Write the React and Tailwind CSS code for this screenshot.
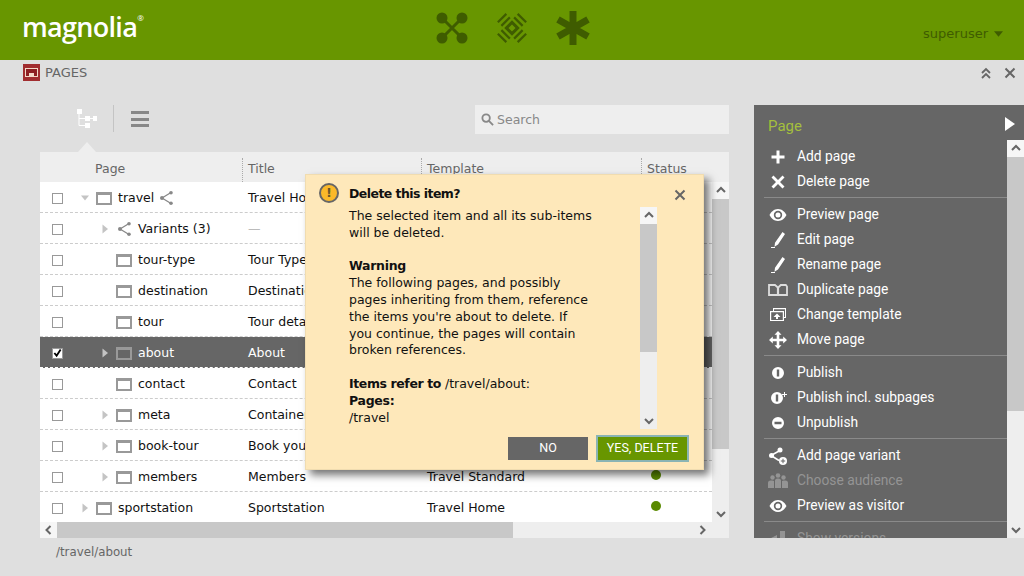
import React from 'react';

const PageIcon = () => (
  <span className="block w-4 h-[13px] border-2 border-[#999] border-t-[3px] bg-transparent shrink-0" />
);

const ShareIcon = ({ className = 'w-4 h-4' }) => (
  <svg viewBox="0 0 16 16" className={className} fill="currentColor">
    <path d="M3 8l9-5.500M3 8l9 5.500" stroke="currentColor" strokeWidth="1.300" fill="none" />
    <circle cx="3" cy="8" r="2" />
    <circle cx="12" cy="2.800" r="1.800" />
    <circle cx="12" cy="13.200" r="1.800" />
  </svg>
);

const Caret = ({ open }) => (
  <svg viewBox="0 0 10 10" className="w-[10px] h-[10px] text-[#c4c4c4]" fill="currentColor">
    {open ? <path d="M1 2.500h8L5 7.500z" /> : <path d="M2.500 0.500v9L8 5z" />}
  </svg>
);

const Chevron = ({ dir }) => {
  const paths = {
    up: 'M2 7l4-4 4 4',
    down: 'M2 4l4 4 4-4',
    left: 'M7.500 2l-4 4 4 4',
    right: 'M4.500 2l4 4-4 4',
  };
  return (
    <svg viewBox="0 0 12 12" className="w-3 h-3 text-[#666]" fill="none" stroke="currentColor" strokeWidth="2">
      <path d={paths[dir]} />
    </svg>
  );
};

const rows = [
  { name: 'travel', title: 'Travel Home', level: 0, caret: 'open', share: true },
  { name: 'Variants (3)', title: '—', level: 1, caret: 'closed', variants: true },
  { name: 'tour-type', title: 'Tour Type', level: 1 },
  { name: 'destination', title: 'Destination', level: 1 },
  { name: 'tour', title: 'Tour detail', level: 1 },
  { name: 'about', title: 'About', level: 1, caret: 'closed', selected: true },
  { name: 'contact', title: 'Contact', level: 1 },
  { name: 'meta', title: 'Container', level: 1, caret: 'closed' },
  { name: 'book-tour', title: 'Book your tour', level: 1, caret: 'closed' },
  { name: 'members', title: 'Members', template: 'Travel Standard', level: 1, caret: 'closed', status: true },
  { name: 'sportstation', title: 'Sportstation', template: 'Travel Home', level: 0, caret: 'closed', status: true },
];

const TableRow = ({ row }) => (
  <div
    className={
      'flex items-center h-[31px] pt-[2px] border-b border-dashed text-[12.5px] ' +
      (row.selected ? 'bg-[#666] text-white border-white' : 'bg-white text-[#111] border-[#ccc]')
    }
  >
    <div className="w-[35px] flex justify-center shrink-0">
      <span className="w-[11px] h-[11px] border border-[#999] bg-white flex items-center justify-center">
        {row.selected && (
          <svg viewBox="0 0 10 10" className="w-[10px] h-[10px]" fill="none" stroke="#000" strokeWidth="2">
            <path d="M1.500 5l2.500 3L8.500 1" />
          </svg>
        )}
      </span>
    </div>
    <div className={'flex items-center w-[173px] shrink-0 ' + (row.level === 0 ? 'pl-[5px]' : 'pl-[25px]')}>
      <span className="w-[16px] flex justify-start shrink-0">{row.caret && <Caret open={row.caret === 'open'} />}</span>
      {row.variants ? (
        <span className="flex items-center ml-[1px] gap-[5px] text-[#111]">
          <ShareIcon className="w-4 h-4 text-[#888]" />
          <span>{row.name}</span>
        </span>
      ) : (
        <span className="flex items-center gap-[6px]">
          <PageIcon />
          <span>{row.name}</span>
          {row.share && <ShareIcon className="w-4 h-4 -ml-[1px] text-[#888]" />}
        </span>
      )}
    </div>
    <div className={'w-[179px] shrink-0 ' + (row.variants ? 'text-[#bbb]' : '')}>{row.title}</div>
    <div className="w-[220px] shrink-0">{row.template}</div>
    {row.status && <span className="w-[10px] h-[10px] rounded-full bg-[#5a8a00] ml-[4px] mb-[5px]" />}
  </div>
);

const I = ({ children }) => (
  <svg viewBox="0 0 20 20" className="w-5 h-5" fill="currentColor">
    {children}
  </svg>
);

const icons = {
  plus: <path d="M8.500 3.500h3v5h5v3h-5v5h-3v-5h-5v-3h5z" />,
  x: <path d="M5.500 3.500L10 8l4.500-4.500 2 2L12 10l4.500 4.500-2 2L10 12l-4.500 4.500-2-2L8 10 3.500 5.500z" />,
  eye: (
    <path
      fillRule="evenodd"
      d="M10 4c4 0 7 3 8.500 6-1.500 3-4.500 6-8.500 6s-7-3-8.500-6C3 7 6 4 10 4zm0 1.800A4.200 4.200 0 1010 14.200 4.200 4.200 0 0010 5.800zm0 1.700a2.500 2.500 0 110 5 2.500 2.500 0 010-5z"
    />
  ),
  pen: <path d="M14.500 2l2.500 2-7 10.500-3.500 2.300.5-4zM3 17h4v1H3z" />,
  book: (
    <path
      d="M1 5h6l2.800 2.500V15H1zM10.200 7.500L12.800 5h5l1.200 1.500V15h-8.800z"
      fill="none"
      stroke="#ddd"
      strokeWidth="1.800"
    />
  ),
  template: (
    <path
      fillRule="evenodd"
      d="M5 3h13v10h-2v3H2V6h3zm1 1.200V6h10v6h1V4.200zM3.200 7.200V15h11.600V7.200zM9 8.500l3.500 3.500H10v2H8v-2H5.500z"
    />
  ),
  move: (
    <path d="M10 1l3.500 3.800h-2.200v3.900h3.900V6.500L19 10l-3.800 3.500v-2.200h-3.900v3.900h2.200L10 19l-3.500-3.800h2.200v-3.900H4.800v2.200L1 10l3.800-3.500v2.200h3.900V4.800H6.500z" />
  ),
  publish: <path fillRule="evenodd" d="M10 4a6 6 0 110 12 6 6 0 010-12zM8.800 6.500v7h2.400v-7z" />,
  publishPlus: (
    <path
      fillRule="evenodd"
      d="M9 4a6 6 0 110 12A6 6 0 019 4zM7.800 6.500v7h2.400v-7zM16 4h1v2h2v1h-2v2h-1V7h-2V6h2z"
    />
  ),
  minus: <path fillRule="evenodd" d="M10 4a6 6 0 110 12 6 6 0 010-12zM6.500 8.800v2.400h7V8.800z" />,
  variant: (
    <>
      <path d="M3 9.500l9-5M3 9.500l8 5" stroke="currentColor" strokeWidth="1.500" fill="none" />
      <circle cx="3.500" cy="9.500" r="2.500" />
      <circle cx="12" cy="4" r="2.500" />
      <circle cx="15" cy="15" r="4" />
      <path d="M14.500 12.800h1v1.700h1.700v1h-1.700v1.700h-1v-1.700h-1.700v-1h1.700z" fill="#666" />
    </>
  ),
  group: (
    <>
      <circle cx="4.500" cy="6.500" r="2.200" />
      <circle cx="10" cy="4.500" r="2.300" />
      <circle cx="15.500" cy="6.500" r="2.200" />
      <path d="M0 17v-5a2.500 2.500 0 012.500-2.500h2L6 10v7zM14 17v-7l1.500-.5h2A2.500 2.500 0 0120 12v5z" />
      <path d="M7 17V10a2.500 2.500 0 012.500-2.500h1A2.500 2.500 0 0113 10v7z" />
    </>
  ),
  versions: <path d="M12 2h5v7h-5zM3 9l6-3v3l-2 3 4 2v3H6l-4-4z" />,
};

const menu = [
  ['plus', 'Add page'],
  ['x', 'Delete page'],
  null,
  ['eye', 'Preview page'],
  ['pen', 'Edit page'],
  ['pen', 'Rename page'],
  ['book', 'Duplicate page'],
  ['template', 'Change template'],
  ['move', 'Move page'],
  null,
  ['publish', 'Publish'],
  ['publishPlus', 'Publish incl. subpages'],
  ['minus', 'Unpublish'],
  null,
  ['variant', 'Add page variant'],
  ['group', 'Choose audience', true],
  ['eye', 'Preview as visitor'],
  null,
  ['versions', 'Show versions', true],
];

const MenuItem = ({ item }) => {
  if (!item) {
    return (
      <div className="h-2 pt-[3px] pl-[10px]">
        <div className="h-[1px] bg-[#8a8a8a]" />
      </div>
    );
  }
  const [icon, label, disabled] = item;
  return (
    <div className={'flex items-center h-[25px] shrink-0 ' + (disabled ? 'text-[#949494]' : 'text-white')}>
      <span className="w-5 ml-[14px] mr-[9px] flex justify-center">
        <I>{icons[icon]}</I>
      </span>
      <span className="text-[13.8px]">{label}</span>
    </div>
  );
};

const HeaderIcons = () => (
  <div className="flex items-center gap-[28px] text-[#3f5c00]">
    <svg viewBox="0 0 32 32" className="w-8 h-8" fill="currentColor">
      <path d="M6 6l20 20M26 6L6 26" stroke="currentColor" strokeWidth="3" />
      <circle cx="6" cy="6" r="5.500" />
      <circle cx="26" cy="6" r="5.500" />
      <circle cx="6" cy="26" r="5.500" />
      <circle cx="26" cy="26" r="5.500" />
    </svg>
    <svg viewBox="-16 -16 32 32" className="w-8 h-8" fill="none" stroke="currentColor" strokeWidth="2.200">
      <g transform="rotate(45)">
        <rect x="-4" y="-4" width="8" height="8" strokeWidth="3" />
        <path d="M-6-9H6M-6 9H6M-9-6V6M9-6V6M-6-14H6M-6 14H6M-14-6V6M14-6V6" />
      </g>
    </svg>
    <svg viewBox="0 0 34 34" className="w-[34px] h-[34px]" fill="none" stroke="currentColor" strokeWidth="7">
      <path d="M17 0v34M2 8.500l30 17M32 8.500l-30 17" />
    </svg>
  </div>
);

const Scrollbar = ({ className, thumb }) => (
  <div className={'flex flex-col w-[17px] bg-[#eee] shrink-0 ' + className}>
    <div className="h-[17px] flex items-center justify-center bg-[#f6f6f6] shrink-0">
      <Chevron dir="up" />
    </div>
    <div className={'bg-[#c8c8c8] shrink-0 ' + thumb} />
    <div className="flex-1" />
    <div className="h-[17px] flex items-center justify-center shrink-0">
      <Chevron dir="down" />
    </div>
  </div>
);

const Dialog = () => (
  <div className="absolute left-[305px] top-[174px] w-[399px] h-[296px] bg-[#fee8ba] border border-[#f0dcb0] shadow-[5px_5px_8px_rgba(0,0,0,0.55)] text-[#111] text-[12.5px] leading-[16.8px]">
    <div className="absolute left-[13px] top-[8px] w-5 h-5 rounded-full border-2 border-[#666] bg-[#fbb92a] flex items-center justify-center text-[#6b5a2a] font-bold text-[13px]">
      !
    </div>
    <div className="absolute left-[43px] top-[11px] font-bold tracking-[-0.55px]">Delete this item?</div>
    <svg viewBox="0 0 12 12" className="absolute left-[368px] top-[14px] w-3 h-3 text-[#666]" fill="none" stroke="currentColor" strokeWidth="2">
      <path d="M1.500 1.500l9 9M10.500 1.500l-9 9" />
    </svg>
    <div className="absolute left-[43px] top-[33px] w-[290px]">
      <p>
        The selected item and all its sub-items
        <br />
        will be deleted.
      </p>
      <p className="mt-[16.8px] font-bold tracking-[-0.3px]">Warning</p>
      <p>
        The following pages, and possibly
        <br />
        pages inheriting from them, reference
        <br />
        the items you're about to delete. If
        <br />
        you continue, the pages will contain
        <br />
        broken references.
      </p>
      <p className="mt-[16.8px]">
        <b className="tracking-[-0.4px]">Items refer to</b> /travel/about:
      </p>
      <p className="font-bold tracking-[-0.3px]">Pages:</p>
      <p>/travel</p>
    </div>
    <Scrollbar className="absolute left-[334px] top-[32px] h-[222px]" thumb="h-[128px]" />
    <div className="absolute left-[202px] top-[262px] w-20 h-[23px] bg-[#666] text-white flex items-center justify-center font-['Roboto',sans-serif] text-[12.5px]">
      NO
    </div>
    <div className="absolute left-[290px] top-[260px] w-[93px] h-[27px] bg-[#689600] border-2 border-[#8ab4b4] text-white flex items-center justify-center font-['Roboto',sans-serif] text-[12.5px]">
      YES, DELETE
    </div>
  </div>
);

export default function App() {
  return (
    <div className="relative w-[1024px] h-[576px] overflow-hidden bg-[#dfdfdf] font-['DejaVu_Sans',sans-serif]">
      <header className="relative flex items-center justify-between h-[60px] bg-[#689600] pl-[22px] pr-[21px]">
        <div className="text-white font-['Open_Sans',sans-serif] font-semibold text-[27px] tracking-[-0.7px] leading-none mb-[8px]">
          magnolia<sup className="text-[8px] font-normal tracking-normal align-[12px]">®</sup>
        </div>
        <div className="absolute left-[436px] top-[11px]">
          <HeaderIcons />
        </div>
        <div className="flex items-center gap-[6px] text-[#3f5c00] text-[13px] mt-[7px]">
          superuser
          <svg viewBox="0 0 10 6" className="w-[9px] h-[6px]" fill="currentColor">
            <path d="M0 0h10L5 6z" />
          </svg>
        </div>
      </header>

      <div className="flex items-center justify-between h-[25px] pl-[23px] pr-[8px]">
        <div className="flex items-center gap-[5px] text-[#666] text-[13px]">
          <span className="w-[17px] h-[17px] bg-[#a12d2f] flex items-center justify-center">
            <span className="w-[13px] h-[9px] border border-[#f3d9c8] bg-[#8d1f22] flex items-end justify-center">
              <span className="w-[5px] h-[3px] bg-[#f3d9c8]" />
            </span>
          </span>
          <span className="pt-[1px]">PAGES</span>
        </div>
        <div className="flex items-center gap-[12px]">
          <svg viewBox="0 0 12 12" className="w-3 h-3 text-[#666]" fill="none" stroke="currentColor" strokeWidth="1.800">
            <path d="M2 6l4-4 4 4M2 11l4-4 4 4" />
          </svg>
          <svg viewBox="0 0 12 12" className="w-3 h-3 text-[#666]" fill="none" stroke="currentColor" strokeWidth="2">
            <path d="M1.500 1.500l9 9M10.500 1.500l-9 9" />
          </svg>
        </div>
      </div>

      <div className="flex pt-5 pl-[40px]">
        <div className="w-[689px]">
          <div className="flex items-start h-[47px]">
            <div className="relative w-[60px] h-full">
              <svg viewBox="0 0 22 20" className="absolute left-[37px] top-[4px] w-[22px] h-5 text-white" fill="currentColor">
                <rect x="0" y="0" width="5" height="5" />
                <rect x="8" y="7" width="5" height="5" />
                <rect x="16" y="7" width="4" height="5" />
                <rect x="8" y="14" width="5" height="5" />
                <path d="M2 5v11.500h6M2 9.500h6M13 9.500h3" stroke="currentColor" fill="none" />
              </svg>
              <div className="absolute left-[38px] bottom-0 w-0 h-0 border-x-[9px] border-x-transparent border-b-[10px] border-b-[#eee]" />
            </div>
            <div className="w-[1px] h-[27px] bg-[#c4c4c4] ml-[13px]" />
            <div className="flex flex-col justify-between w-[18px] h-[16px] mt-[6px] ml-[17px]">
              <span className="h-[3px] bg-[#888]" />
              <span className="h-[3px] bg-[#888]" />
              <span className="h-[3px] bg-[#888]" />
            </div>
            <div className="flex items-center ml-[326px] w-[254px] h-[29px] bg-[#eee] pl-[6px] gap-[3px] text-[#888] text-[12.5px]">
              <svg viewBox="0 0 14 14" className="w-[13px] h-[13px]" fill="none" stroke="#888" strokeWidth="2">
                <circle cx="5.500" cy="5.500" r="4" />
                <path d="M8.500 8.500l4.500 4.500" />
              </svg>
              <span className="pt-[1px]">Search</span>
            </div>
          </div>

          <div className="flex items-end h-[30px] bg-[#eee] text-[#666] text-[12.5px] leading-[22px]">
            <div className="w-[55px]" />
            <div className="w-[147px] h-[24px]">Page</div>
            <div className="w-[179px] pl-[5px] border-l border-dotted border-[#aaa] h-[24px]">Title</div>
            <div className="w-[220px] pl-[5px] border-l border-dotted border-[#aaa] h-[24px]">Template</div>
            <div className="pl-[5px] border-l border-dotted border-[#aaa] h-[24px]">Status</div>
          </div>
          <div className="flex h-[340px]">
            <div className="flex-1 overflow-hidden">
              {rows.map((row) => (
                <TableRow key={row.name} row={row} />
              ))}
            </div>
            <Scrollbar className="h-[340px]" thumb="h-[250px]" />
          </div>
          <div className="flex items-center h-[16px] bg-[#eee]">
            <div className="w-[17px] h-full flex items-center justify-center bg-[#f6f6f6]">
              <Chevron dir="left" />
            </div>
            <div className="w-[456px] h-full bg-[#c8c8c8]" />
            <div className="flex-1" />
            <div className="w-[34px] flex items-center justify-start pl-[1px]">
              <Chevron dir="right" />
            </div>
          </div>
          <div className="pl-[16px] pt-[6px] text-[11.8px] text-[#666]">/travel/about</div>
        </div>

        <aside className="w-[270px] h-[433px] ml-[25px] bg-[#666] flex flex-col font-['Roboto',sans-serif]">
          <div className="flex items-center justify-between h-[35px] shrink-0 pt-2 pl-[14px] pr-[9px] text-[#a4bf3d] text-[15px]">
            Page
            <svg viewBox="0 0 10 14" className="w-[10px] h-[14px] mb-[6px]" fill="#fff">
              <path d="M0 0l10 7-10 7z" />
            </svg>
          </div>
          <div className="flex flex-1 min-h-0">
            <div className="flex-1 overflow-hidden pt-1">
              {menu.map((item, i) => (
                <MenuItem key={i} item={item} />
              ))}
            </div>
            <Scrollbar className="h-[398px]" thumb="h-[254px]" />
          </div>
        </aside>
      </div>

      <Dialog />
    </div>
  );
}
